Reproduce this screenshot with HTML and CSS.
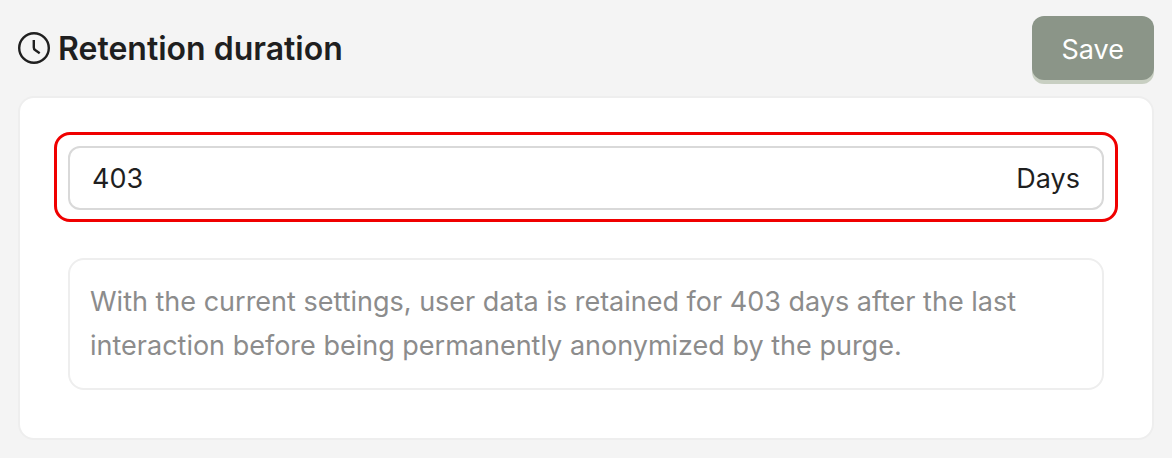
FILE: index.html
```html
<!DOCTYPE html>
<html lang="en">
<head>
<meta charset="utf-8">
<meta name="viewport" content="width=device-width, initial-scale=1">
<title>Retention duration</title>
<link rel="stylesheet" href="styles.css">
</head>
<body>
<form class="settings">
  <header class="header">
    <h1 class="title">
      <svg class="icon" viewBox="0 0 32 32" aria-hidden="true"><circle cx="16" cy="16" r="14.8"/><path d="M15.800 7.900V15.500c0 1.200.4 1.900 1.300 2.500L21.700 21.200"/></svg>
      <label for="duration">Retention duration</label>
    </h1>
    <button class="save" type="button">Save</button>
  </header>
  <section class="card">
    <div class="highlight">
      <div class="field">
        <input class="input" id="duration" type="text" inputmode="numeric" value="403">
        <span class="unit">Days</span>
      </div>
    </div>
    <p class="note">With the current settings, user data is retained for 403 days after the last interaction before being permanently anonymized by the purge.</p>
  </section>
</form>
</body>
</html>
```
FILE: styles.css
```css
* {
  box-sizing: border-box;
}

body {
  margin: 0;
  background: #f4f4f4;
  color: #1f1f1f;
  font-family: Inter, sans-serif;
  font-size: 27px;
}

.settings {
  padding: 16px 18px;
}

.header {
  display: flex;
  align-items: flex-start;
  justify-content: space-between;
  margin-bottom: 16px;
}

.title {
  display: flex;
  align-items: center;
  gap: 8px;
  margin: 0;
  font-size: 32px;
  line-height: 62px;
  font-weight: 600;
}

.title label {
  padding-top: 2px;
}

.icon {
  width: 32px;
  height: 32px;
  fill: none;
  stroke: currentColor;
  stroke-width: 2.4;
}

.save {
  height: 64px;
  padding: 2px 30px 0;
  border: 0;
  border-radius: 12px;
  background: #8b9588;
  box-shadow: 0 4px 0 #c8cfc2;
  color: #ffffff;
  font: inherit;
}

.card {
  padding: 34px;
  border: 2px solid #eeeeee;
  border-radius: 16px;
  background: #ffffff;
}

.highlight {
  padding: 11px 11px 9px;
  border: 3px solid #f00000;
  border-radius: 16px;
}

.field {
  display: flex;
  align-items: center;
  height: 64px;
  padding: 0 22px;
  border: 2px solid #d9d9d9;
  border-radius: 12px;
}

.input {
  flex: 1;
  min-width: 0;
  padding: 0;
  border: 0;
  outline: 0;
  background: transparent;
  color: inherit;
  font: inherit;
}

.note {
  margin: 36px 14px 14px;
  padding: 20px;
  border: 2px solid #eeeeee;
  border-radius: 16px;
  color: #8c8c8c;
  line-height: 44px;
}
```
